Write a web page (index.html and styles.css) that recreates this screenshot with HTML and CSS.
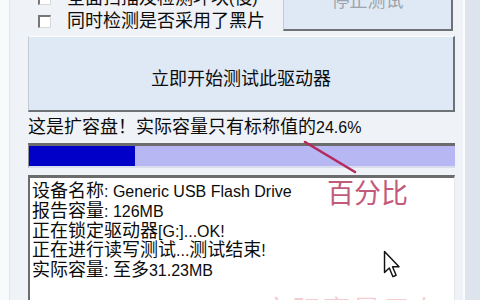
FILE: index.html
```html
<!DOCTYPE html>
<html lang="zh-CN">
<head>
<meta charset="utf-8">
<title>扩容盘检测</title>
<link rel="stylesheet" href="styles.css">
</head>
<body>
<div class="page">
  <div class="edge-left"></div>
  <div class="main">
    <div class="top">
      <div class="checks">
        <div class="check"><span class="box"></span><span>全面扫描及检测坏块<span class="en">(</span>慢<span class="en">)</span></span></div>
        <div class="check"><span class="box"></span><span>同时检测是否采用了黑片</span></div>
      </div>
      <div class="btn stop">停止测试</div>
    </div>
    <div class="btn start">立即开始测试此驱动器</div>
    <div class="status">这是扩容盘！实际容量只有标称值的<span class="en">24.6%</span></div>
    <div class="bar"><div class="fill" style="width:24.8%"></div></div>
    <div class="log">
      <div>设备名称<span class="en">: Generic USB Flash Drive</span></div>
      <div>报告容量<span class="en">: 126MB</span></div>
      <div>正在锁定驱动器<span class="en">[G:]...OK!</span></div>
      <div>正在进行读写测试<span class="en">...</span>测试结束<span class="en">!</span></div>
      <div>实际容量<span class="en">: </span>至多<span class="en">31.23MB</span></div>
    </div>
  </div>
  <div class="edge-gap"></div>
  <div class="edge-line"></div>
  <div class="edge-far"></div>

  <svg class="callout" viewBox="0 0 480 300" width="480" height="300">
    <line x1="305" y1="142" x2="355" y2="172" stroke="#b42a5c" stroke-width="2.6" stroke-linecap="round"/>
  </svg>
  <div class="note">百分比</div>
  <div class="caption">实际容量只有</div>
  <svg class="cursor" viewBox="0 0 13 20" width="19" height="29">
    <path d="M1 1 L1 15.5 L4.3 12.4 L6.8 18.4 L9 17.4 L6.5 11.6 L11 11.6 Z" fill="#fff" stroke="#111" stroke-width="1" stroke-linejoin="round"/>
  </svg>
</div>
</body>
</html>
```

FILE: styles.css
```css
body {
  margin: 0;
  width: 480px;
  height: 300px;
  overflow: hidden;
  background: #eff2f6;
  font-family: "Liberation Sans", "Noto Sans CJK SC", sans-serif;
  font-size: 18px;
  color: #0c0c0c;
}

.page {
  position: relative;
  display: flex;
  height: 300px;
  overflow: hidden;
}

.edge-left {
  width: 9px;
  background: #f9fafb;
  border-right: 1px solid #e1e5ea;
  flex: none;
}

.main {
  margin-left: 18px;
  width: 427px;
  flex: none;
  display: flex;
  flex-direction: column;
}

.edge-gap { width: 8px; flex: none; }
.edge-line { width: 2px; background: #fbfcfd; flex: none; }
.edge-far { width: 15px; background: #dde4ee; flex: none; }

.top {
  display: flex;
  margin-top: -33px;
  height: 64px;
  flex: none;
}

.checks {
  width: 255px;
  box-sizing: border-box;
  padding: 20px 0 0 10px;
}

.check {
  display: flex;
  align-items: center;
  gap: 16px;
  height: 23px;
  line-height: 23px;
  white-space: nowrap;
}

.box {
  flex: none;
  width: 13px;
  height: 13px;
  box-sizing: border-box;
  background: #fff;
  border-top: 2px solid #777;
  border-left: 2px solid #777;
  border-right: 1px solid #d8d8d8;
  border-bottom: 1px solid #d8d8d8;
}

.btn {
  box-sizing: border-box;
  background: #dfe9f5;
  border-top: 1px solid #fbfcfd;
  border-left: 1px solid #c3cad3;
  border-right: 2px solid #6e7276;
  border-bottom: 2px solid #6e7276;
  display: flex;
  align-items: center;
  justify-content: center;
  white-space: nowrap;
}

.stop {
  width: 170px;
  height: 64px;
  color: #9ea4ac;
}

.start {
  flex: none;
  margin-top: 5px;
  height: 76px;
  padding-top: 6px;
}

.status {
  flex: none;
  height: 30px;
  line-height: 30px;
  white-space: nowrap;
}

.bar {
  flex: none;
  margin-top: 1px;
  height: 25px;
  box-sizing: border-box;
  border-top: 3px solid #6c6c6c;
  border-left: 1px solid #8e8e8e;
  border-bottom: 2px solid #d9dcea;
  background: #b7b7f4;
}

.fill {
  height: 100%;
  background: #0000c8;
}

.log {
  flex: 1;
  margin-top: 7px;
  background: #fff;
  border-top: 3px solid #6c6c6c;
  border-left: 2px solid #6c6c6c;
  border-right: 1px solid #e4e6ea;
  padding: 4px 0 0 2px;
  line-height: 18.8px;
  white-space: nowrap;
}

.en { font-size: 16px; }

.callout {
  position: absolute;
  left: 0;
  top: 0;
  pointer-events: none;
}

.note {
  position: absolute;
  left: 327px;
  top: 177px;
  font-family: "Noto Sans CJK SC", sans-serif;
  font-size: 27px;
  line-height: 30px;
  color: #c25a7a;
}

.caption {
  position: absolute;
  left: 262px;
  top: 294px;
  font-family: "Noto Sans CJK SC", sans-serif;
  font-size: 29px;
  line-height: 30px;
  letter-spacing: 1px;
  color: rgba(226, 112, 122, 0.35);
}

.cursor {
  position: absolute;
  left: 383px;
  top: 250px;
}
```
